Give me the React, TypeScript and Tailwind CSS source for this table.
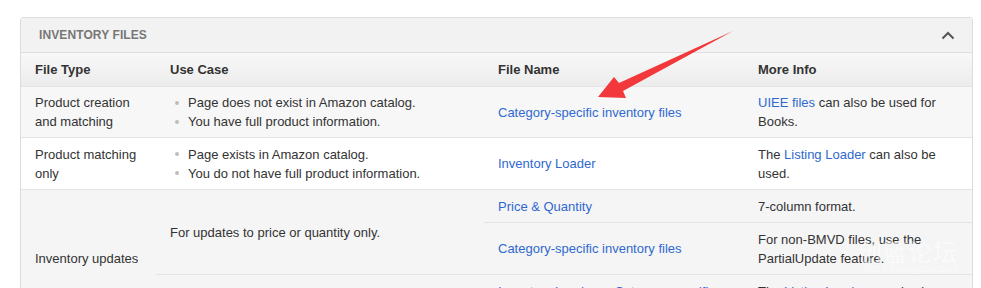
import React from 'react';

const link = 'text-[#2f69cf]';

const Bullets: React.FC<{ items: string[] }> = ({ items }) => (
  <ul className="pl-[5px]">
    {items.map((item) => (
      <li key={item} className="flex items-center gap-[9px]">
        <span className="w-[4px] h-[4px] rounded-full bg-[#bdbdbd] shrink-0" />
        <span>{item}</span>
      </li>
    ))}
  </ul>
);

const td = 'pl-[14px] pr-[15px] align-middle border-t border-[#e4e4e4]';

const App: React.FC = () => {
  return (
    <div className="relative w-[981px] h-[288px] overflow-hidden bg-white font-['Liberation_Sans',Arial,sans-serif] text-[13px] leading-[19px] text-[#333]">
      <div className="pt-[17px] pl-[20px] pr-[8px]">
        <div className="border border-[#dcdcdc] rounded-t-[3px] bg-white">
          {/* panel title bar */}
          <div className="h-[34px] flex items-center justify-between pl-[18px] pr-[17px] bg-[#f2f2f2]">
            <span className="text-[12px] font-bold text-[#777] tracking-[0.1px]">INVENTORY FILES</span>
            <svg width="14" height="9" viewBox="0 0 14 9">
              <path d="M1.5 7.5 L7 2 L12.5 7.5" fill="none" stroke="#555" strokeWidth="2" />
            </svg>
          </div>

          <table className="w-full table-fixed border-collapse">
            <colgroup>
              <col className="w-[135px]" />
              <col className="w-[328px]" />
              <col className="w-[260px]" />
              <col />
            </colgroup>
            <thead>
              <tr className="h-[34px] bg-gradient-to-b from-[#f8f8f8] to-[#ececec]">
                {['File Type', 'Use Case', 'File Name', 'More Info'].map((h) => (
                  <th key={h} className="pl-[14px] text-left font-bold align-middle border-t border-[#dedede]">
                    {h}
                  </th>
                ))}
              </tr>
            </thead>
            <tbody>
              <tr className="h-[51px] bg-[#f7f7f7]">
                <td className={td}>Product creation and matching</td>
                <td className={td}>
                  <Bullets items={['Page does not exist in Amazon catalog.', 'You have full product information.']} />
                </td>
                <td className={td}>
                  <span className={link}>Category-specific inventory files</span>
                </td>
                <td className={td}>
                  <span className={link}>UIEE files</span> can also be used for Books.
                </td>
              </tr>
              <tr className="h-[52px] bg-white">
                <td className={td}>Product matching only</td>
                <td className={td}>
                  <Bullets items={['Page exists in Amazon catalog.', 'You do not have full product information.']} />
                </td>
                <td className={td}>
                  <span className={link}>Inventory Loader</span>
                </td>
                <td className={td}>
                  The <span className={link}>Listing Loader</span> can also be used.
                </td>
              </tr>
              <tr className="h-[33px] bg-[#f5f5f5]">
                <td rowSpan={3} className={td}>Inventory updates</td>
                <td rowSpan={2} className={td}>For updates to price or quantity only.</td>
                <td className={td}>
                  <span className={link}>Price &amp; Quantity</span>
                </td>
                <td className={td}>7-column format.</td>
              </tr>
              <tr className="h-[52px] bg-[#f5f5f5]">
                <td className={td}>
                  <span className={link}>Category-specific inventory files</span>
                </td>
                <td className={td}>For non-BMVD files, use the PartialUpdate feature.</td>
              </tr>
              <tr className="h-[53px] bg-[#f5f5f5]">
                <td className={td}></td>
                <td className={td}>
                  <span className={link}>Inventory Loader</span> or <span className={link}>Category-specific inventory files</span>
                </td>
                <td className={td}>
                  The <span className={link}>Listing Loader</span> can also be used for updates.
                </td>
              </tr>
            </tbody>
          </table>
        </div>
      </div>

      {/* red callout arrow */}
      <svg className="absolute inset-0 pointer-events-none" width="981" height="288" viewBox="0 0 981 288">
        <polygon
          points="598,97 614,77 619,83 733,31 623,91 626,98"
          fill="#f2383b"
        />
      </svg>

      {/* faint site watermark */}
      <div className="absolute left-[858px] top-[238px] pointer-events-none text-white/50 font-['Noto_Sans_CJK_SC',sans-serif]">
        <div className="text-[24px] leading-[26px] tracking-[1px]">创蓝论坛</div>
        <div className="text-[10px] leading-[10px] pl-[6px] font-['Liberation_Sans',Arial,sans-serif]">bbs.ichuangqian.com</div>
      </div>
    </div>
  );
};

export default App;
